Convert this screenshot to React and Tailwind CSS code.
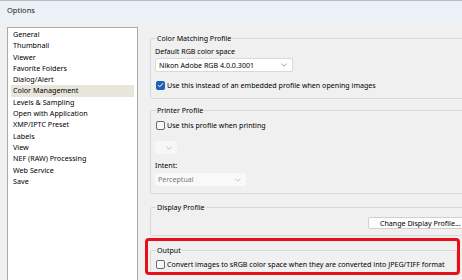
import React from "react";

const items = [
  "General",
  "Thumbnail",
  "Viewer",
  "Favorite Folders",
  "Dialog/Alert",
  "Color Management",
  "Levels & Sampling",
  "Open with Application",
  "XMP/IPTC Preset",
  "Labels",
  "View",
  "NEF (RAW) Processing",
  "Web Service",
  "Save",
];

function Chevron({ color = "#8a8a8a" }) {
  return (
    <svg width="6" height="4" viewBox="0 0 6 4" className="shrink-0">
      <path d="M0.5 0.8 L3 3.2 L5.5 0.8" fill="none" stroke={color} strokeWidth="0.8" />
    </svg>
  );
}

function Checkbox({ checked }) {
  return checked ? (
    <div className="w-[9px] h-[9px] rounded-[2px] bg-[#1b62b8] flex items-center justify-center shrink-0">
      <svg width="7" height="6" viewBox="0 0 7 6">
        <path d="M1 3.2 L2.8 4.8 L6 1.2" fill="none" stroke="#fff" strokeWidth="1" />
      </svg>
    </div>
  ) : (
    <div className="w-[9px] h-[9px] rounded-[2px] border border-[#6a6a6a] bg-[#f7f7f7] shrink-0" />
  );
}

function Group({ label, className = "", children }) {
  return (
    <fieldset className={"border border-[#d8d8d8] rounded-[2px] px-[4px] " + className}>
      <legend className="ml-[1px] px-[1px] h-[10px] leading-[10px] text-black">{label}</legend>
      {children}
    </fieldset>
  );
}

export default function App() {
  return (
    <div
      className="w-[462px] h-[280px] overflow-hidden bg-[#f0f0f0] text-[7.1px] text-black"
      style={{ fontFamily: '"Noto Sans", "Open Sans", sans-serif' }}
    >
      <div className="h-[21px] border-t border-[#bdbdbd] bg-gradient-to-b from-[#eaf0f7] to-[#edf2f7] flex items-center pl-[7px] text-[7.5px] text-[#1a1a1a]">
        Options
      </div>
      <div className="flex pt-[6px] pl-[7px]">
        <div className="w-[131px] h-[270px] shrink-0 bg-white border border-[#a9a9a9] pt-[1px] text-[7.2px]">
          {items.map((it) => (
            <div
              key={it}
              className={
                "mx-[3px] pl-[2px] h-[11.3px] leading-[11.3px] whitespace-nowrap " +
                (it === "Color Management" ? "bg-[#e8e6da]" : "")
              }
            >
              {it}
            </div>
          ))}
        </div>

        <div className="ml-[12px] w-[328px] shrink-0 flex flex-col pt-[6px]">
          <Group label="Color Matching Profile" className="pb-[8px]">
            <div className="mt-[3px] h-[10px] leading-[10px]">Default RGB color space</div>
            <div className="mt-[2px] w-[138px] h-[14px] bg-white border border-[#d9d9d9] rounded-[2px] flex items-center justify-between pl-[3px] pr-[5px]">
              <span>Nikon Adobe RGB 4.0.0.3001</span>
              <Chevron />
            </div>
            <div className="mt-[8px] h-[10px] flex items-center gap-[2px] ml-[1px]">
              <Checkbox checked />
              <span>Use this instead of an embedded profile when opening images</span>
            </div>
          </Group>

          <Group label="Printer Profile" className="mt-[6px] pb-[7px]">
            <div className="mt-[5px] h-[10px] flex items-center gap-[2px] ml-[1px]">
              <Checkbox />
              <span>Use this profile when printing</span>
            </div>
            <div className="mt-[11px] w-[22px] h-[13px] bg-[#f7f7f7] rounded-[2px] flex items-center justify-end pr-[5px]">
              <Chevron color="#b5b5b5" />
            </div>
            <div className="mt-[6px] h-[10px] leading-[10px]">Intent:</div>
            <div className="mt-[3px] w-[91px] h-[13px] bg-[#f9f9f9] rounded-[2px] flex items-center justify-between pl-[3px] pr-[5px] text-[#7a7a7a]">
              <span>Perceptual</span>
              <Chevron color="#b5b5b5" />
            </div>
          </Group>

          <Group label="Display Profile" className="mt-[8px] pb-[6px]">
            <div className="mt-[5px] flex justify-end">
              <div className="w-[105px] h-[12px] bg-[#fdfdfd] border border-[#d0d0d0] rounded-[2px] flex items-center pl-[11px] whitespace-nowrap">
                Change Display Profile...
              </div>
            </div>
          </Group>

          <div className="relative mt-[9px] w-[307px]">
            <Group label="Output" className="pb-[4px]">
              <div className="mt-[4px] h-[10px] flex items-center gap-[2px] ml-[1px]">
                <Checkbox />
                <span className="whitespace-nowrap">
                  Convert images to sRGB color space when they are converted into JPEG/TIFF format
                </span>
              </div>
            </Group>
            <div className="absolute left-[-5px] top-[-7px] w-[315px] h-[37px] border-[3px] border-[#e5101a] rounded-[4px] pointer-events-none" />
          </div>
        </div>
      </div>
    </div>
  );
}
